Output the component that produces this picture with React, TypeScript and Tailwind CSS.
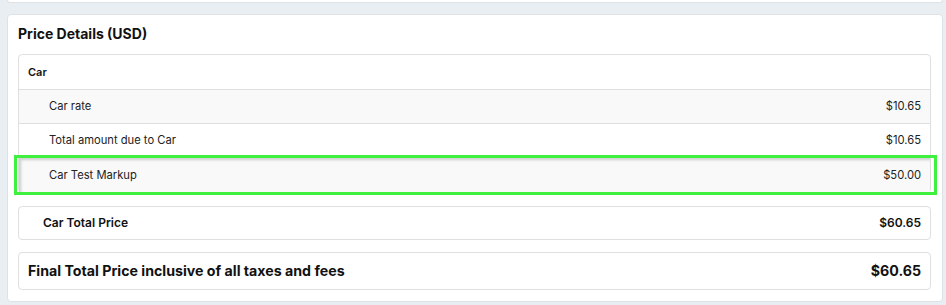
import React from "react";

const rows = [
  { label: "Car rate", amount: "$10.65", bg: "bg-[#f9f9f9]" },
  { label: "Total amount due to Car", amount: "$10.65", bg: "bg-white" },
];

export default function App() {
  return (
    <div
      className="w-[946px] h-[305px] bg-[#e9eef3] overflow-hidden text-[#212529]"
      style={{ fontFamily: "Inter, 'Noto Sans', sans-serif" }}
    >
      {/* previous card edge */}
      <div className="ml-[7px] mr-[3px] h-[3px] bg-white rounded-b border-b border-x border-[#dde2e7]" />

      <div className="ml-[7px] mr-[3px] mt-[11px] bg-white border border-[#dde2e7] rounded pl-[10px] pr-[11px] pt-[10px] h-[288px]">
        <h2 className="text-[14px] font-bold leading-[18px] text-[#111]">
          Price Details (USD)
        </h2>

        <div className="mt-[11px] border border-[#dfdfdf] rounded">
          <div className="h-[34px] px-[9px] flex items-center text-[11px] font-semibold text-[#111]">
            Car
          </div>
          {rows.map((r) => (
            <div
              key={r.label}
              className={`h-[34px] border-t border-[#dfdfdf] ${r.bg} pl-[30px] pr-[9px] flex items-center justify-between text-[11.2px] text-[#222]`}
            >
              <span>{r.label}</span>
              <span>{r.amount}</span>
            </div>
          ))}
          <div className="relative h-[35px] border-t border-[#dfdfdf] bg-[#f9f9f9] pl-[30px] pr-[9px] flex items-center justify-between text-[11.2px] text-[#222] shadow-[inset_2px_2px_3px_rgba(0,0,0,0.18)]">
            <span>Car Test Markup</span>
            <span>$50.00</span>
            <div className="absolute -left-[5px] -right-[7px] -top-[3px] -bottom-[3px] border-[3px] border-[#3ff03f] pointer-events-none" />
          </div>
        </div>

        <div className="mt-[13px] h-[34px] border border-[#dfdfdf] rounded pl-[24px] pr-[9px] flex items-center justify-between text-[12px] font-semibold text-[#111]">
          <span>Car Total Price</span>
          <span>$60.65</span>
        </div>

        <div className="mt-[12px] h-[38px] border border-[#dfdfdf] rounded pl-[9px] pr-[9px] flex items-center justify-between text-[14.2px] font-bold text-[#111]">
          <span>Final Total Price inclusive of all taxes and fees</span>
          <span>$60.65</span>
        </div>
      </div>
    </div>
  );
}
